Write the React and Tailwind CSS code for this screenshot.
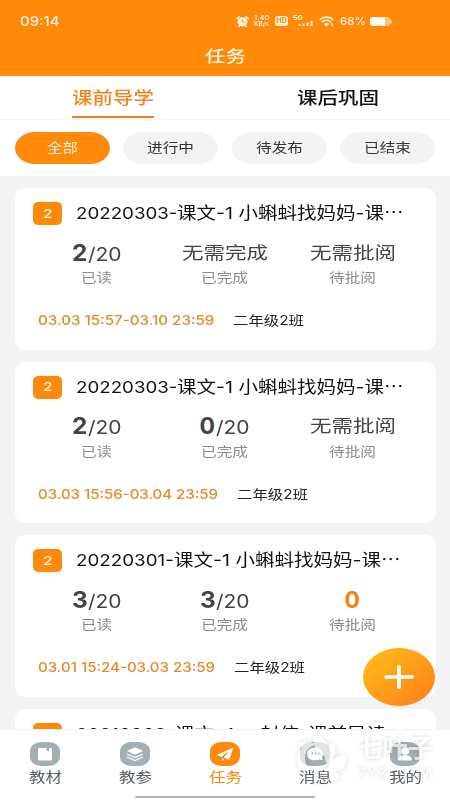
import { useLayoutEffect, useRef, useState } from "react";
import clsx from "clsx";

const FILTERS = [
  { label: "全部", width: 31 },
  { label: "进行中", width: 47 },
  { label: "待发布", width: 47 },
  { label: "已结束", width: 47 }
];

const TASKS = [
  {
    head: "20220303-",
    headWidth: 101,
    tail: "课文-1 小蝌蚪找妈妈-课⋯",
    tailWidth: 227,
    stats: [
      { label: "已读", count: "2", total: "/20" },
      { label: "已完成", text: "无需完成" },
      { label: "待批阅", text: "无需批阅" }
    ],
    period: "03.03 15:57-03.10 23:59",
    periodWidth: 176,
    group: "二年级2班"
  },
  {
    head: "20220303-",
    headWidth: 101,
    tail: "课文-1 小蝌蚪找妈妈-课⋯",
    tailWidth: 227,
    stats: [
      { label: "已读", count: "2", total: "/20" },
      { label: "已完成", count: "0", total: "/20" },
      { label: "待批阅", text: "无需批阅" }
    ],
    period: "03.03 15:56-03.04 23:59",
    periodWidth: 180,
    group: "二年级2班"
  },
  {
    head: "20220301-",
    headWidth: 98,
    tail: "课文-1 小蝌蚪找妈妈-课⋯",
    tailWidth: 227,
    stats: [
      { label: "已读", count: "3", total: "/20" },
      { label: "已完成", count: "3", total: "/20" },
      { label: "待批阅", count: "0", active: true }
    ],
    period: "03.01 15:24-03.03 23:59",
    periodWidth: 177,
    group: "二年级2班"
  },
  {
    head: "20210903-",
    headWidth: 99,
    tail: "课文-4 一封信-课前导读",
    tailWidth: 211,
    stats: [],
    period: "",
    periodWidth: 0,
    group: ""
  }
];

// Stretches a single line of text to the given width
const Fit = ({ width, className, children }) => {
  const ref = useRef(null);
  const [scale, setScale] = useState(1.2);

  useLayoutEffect(() => {
    const measure = () => ref.current && setScale(width / ref.current.offsetWidth);
    measure();
    document.fonts.ready.then(measure);
  }, [width]);

  return (
    <span className={clsx("inline-flex shrink-0 whitespace-pre", className)} style={{ width }}>
      <span ref={ref} className="shrink-0 origin-left" style={{ transform: `scaleX(${scale})` }}>
        {children}
      </span>
    </span>
  );
};

const StatusBar = () => (
  <div className="flex h-[42px] items-center pl-5 text-[#fff3dc]">
    <Fit width={39} className="mt-px text-[13px] font-medium">09:14</Fit>
    <div className="ml-[177px] flex items-center">
      <svg className="h-[11px] w-[13px]" viewBox="0 0 13 11" fill="none">
        <ellipse cx="6.5" cy="5.8" rx="5" ry="4.7" fill="currentColor" />
        <path d="M.8 2.6 3 .7M12.2 2.6 10 .7M2.8 10.6l1-1M10.2 10.6l-1-1" stroke="currentColor" strokeWidth="1.4" strokeLinecap="round" />
        <path d="M6.3 3.5v2.5h2.2" stroke="#ff8a0a" strokeWidth="1" />
      </svg>
      <div className="ml-[5px] flex flex-col text-[6px] leading-[6px] font-semibold">
        <Fit width={15}>1.40</Fit>
        <Fit width={15}>KB/s</Fit>
      </div>
      <div className="ml-[6px] flex h-[10px] w-[13px] items-center justify-center rounded-[3px] bg-[#fff3dc] text-[#ff8a0a]">
        <Fit width={10} className="text-[7px] leading-[8px] font-bold">HD</Fit>
      </div>
      <svg className="ml-[5px] h-[12px] w-[21px]" viewBox="0 0 21 12" fill="currentColor">
        <text x="0" y="5.2" fontSize="6.5" fontWeight="700" textLength="10" lengthAdjust="spacingAndGlyphs">5G</text>
        <path d="M5.5 9h2v2h-2zM9.5 8.5h2V11h-2zM13.5 7.5h2V11h-2zM17.5 6h2v5h-2z" />
      </svg>
      <svg className="ml-[5px] h-[11px] w-[15px]" viewBox="0 0 15 11" fill="none" stroke="currentColor" strokeWidth="1.7">
        <path d="M.6 3.8c3.8-3.6 10-3.6 13.8 0M2.9 6.2c2.7-2.4 6.5-2.4 9.2 0" />
        <path d="M4.8 8c1.6-1.4 3.8-1.4 5.4 0L7.5 10.5z" fill="currentColor" stroke="none" />
        <path d="M13 7v3.6" strokeWidth="1.5" />
      </svg>
      <Fit width={26} className="mt-px ml-[6px] text-[11px] font-medium">68%</Fit>
      <div className="ml-1 flex items-center">
        <div className="flex h-[9px] w-5 overflow-hidden rounded-[3px] bg-[#ffc483]">
          <div className="w-[15px] bg-[#fffaf0]" />
        </div>
        <div className="h-[5px] w-[2px] rounded-r-full bg-[#ffc483]" />
      </div>
    </div>
  </div>
);

const Stat = ({ label, count, total, text, active }) => (
  <div className="flex w-32 flex-col items-center">
    <div className="flex h-7 items-center text-[#444]">
      {text && <Fit width={86} className="text-[17.5px]">{text}</Fit>}
      {count && (
        <div className="flex items-baseline">
          <Fit width={16} className={clsx("text-[23px] leading-7 font-bold", active && "text-[#f5820d]")}>{count}</Fit>
          {total && <Fit width={34} className="text-[18.5px] leading-7">{total}</Fit>}
        </div>
      )}
    </div>
    <Fit width={label.length === 2 ? 31 : 47} className="text-[13px] leading-5 text-[#8c8c8c]">
      {label}
    </Fit>
  </div>
);

const TaskCard = ({ task }) => (
  <div className="h-[161.5px] shrink-0 rounded-[10px] bg-white pt-[14px] pl-[18px]">
    <div className="flex h-[23px] items-center">
      <div className="flex h-[23px] w-[29px] items-center justify-center rounded-[5px] bg-[#ff8a0a] text-[#fff3dc]">
        <Fit width={9} className="text-[12px] font-medium">2</Fit>
      </div>
      <Fit width={task.headWidth} className="ml-[14px] text-[16.5px] text-[#111]">{task.head}</Fit>
      <Fit width={task.tailWidth} className="text-[16.5px] text-[#111]">{task.tail}</Fit>
    </div>
    <div className="mt-[14px] flex h-[51px]">
      {task.stats.map((stat) => (
        <Stat key={stat.label} {...stat} />
      ))}
    </div>
    {task.period && (
      <div className="mt-[21px] ml-[5px] flex h-5 items-center">
        <Fit width={task.periodWidth} className="text-[13px] font-medium text-[#e8892a]">{task.period}</Fit>
        <Fit width={71} className="ml-[19px] text-[13px] text-[#222]">{task.group}</Fit>
      </div>
    )}
  </div>
);

const NAV = [
  {
    label: "教材",
    icon: (
      <>
        <rect x="8" y="6" width="14" height="12.5" rx="1.2" fill="#fff" />
        <path d="M16.6 5.5v4l1.2-.9 1.2.9v-4z" fill="#a3afb4" />
      </>
    )
  },
  {
    label: "教参",
    icon: (
      <>
        <path d="M15 5.3 23 9l-8 3.8L7 9z" fill="#fff" />
        <path d="m7 12 8 3.6 8-3.6M7 15l8 3.6 8-3.6" fill="none" stroke="#fff" strokeWidth="1.2" />
      </>
    )
  },
  {
    label: "任务",
    active: true,
    icon: (
      <>
        <path d="M23.5 5.5 6.5 13l5 1.7 8.5-6.4-6.2 7.2 5.4 2.2z" fill="#fff" />
        <path d="M12 16v3.4l2.2-2.3z" fill="#fff" />
      </>
    )
  },
  {
    label: "消息",
    icon: (
      <>
        <path d="M15 5.5c4.6 0 8 2.6 8 6.2 0 2-.8 3.2-.8 4.2l.5 2.4-3.2-.7c-1.3.5-2.9.7-4.5.7-4.6 0-8-2.8-8-6.4s3.4-6.4 8-6.4z" fill="#fff" />
        <path d="M11.5 11.5H13M15 11.5h1.5M18.5 11.5h1.3" stroke="#a3afb4" strokeWidth="1.5" />
      </>
    )
  },
  {
    label: "我的",
    icon: (
      <>
        <ellipse cx="15" cy="9" rx="4.4" ry="3.9" fill="#fff" />
        <path d="M8 18.5c0-3.6 2.7-5.3 7-5.3s7 1.7 7 5.3z" fill="#fff" />
      </>
    )
  }
];

const Watermark = () => (
  <div className="absolute top-[3px] left-[297px] flex text-white">
    <svg className="mt-[2px] h-[50px] w-[50px] opacity-65 drop-shadow-[0_0_3px_rgba(0,0,0,0.2)]" viewBox="0 0 50 50" fill="currentColor">
      <path d="M18 0c10 2 16 10 12 22C20 19 14 10 18 0z" />
      <path d="M36 8c5 9 2 17-7 20-3-9-1-16 7-20z" />
      <path d="M49 20c1 12-6 19-18 17-1-10 6-17 18-17z" />
      <path d="M43 43c-9 5-17 1-19-8 8-3 16 0 19 8z" />
      <path d="M2 9c6-4 13-3 17 1-7 1-11 6-11 13 0 9 7 15 17 17C10 44 0 37 0 23c0-4 2-7 5-10z" />
      <path d="M7 40c5 8 15 10 23 4-6 1-12-1-16-5z" />
    </svg>
    <div className="ml-[10px] flex flex-col [text-shadow:0_0_4px_rgba(0,0,0,0.28)]">
      <Fit width={76} className="text-[25px] leading-[31px] font-bold opacity-65">七叶子</Fit>
      <Fit width={77} className="text-[13px] leading-[18px] tracking-[1px] opacity-80">7YZ.COM</Fit>
    </div>
  </div>
);

const BottomNav = () => (
  <nav className="relative h-[71px] shrink-0 border-t border-[#edf2f4] bg-white">
    <div className="flex pt-3">
      {NAV.map(({ label, icon, active }) => (
        <div key={label} className={clsx("flex w-[90px] flex-col items-center", active ? "text-[#ff8a0a]" : "text-[#596065]")}>
          <svg className="h-6 w-[30px]" viewBox="0 0 30 24">
            <rect width="30" height="24" rx="11" ry="9" fill={active ? "#ff8a0a" : "#a3afb4"} />
            {icon}
          </svg>
          <Fit width={33} className="relative z-10 mt-[2px] text-[13.5px] leading-[18px]">{label}</Fit>
        </div>
      ))}
    </div>
    <div className="mx-auto mt-[10px] h-[2px] w-[180px] rounded-full bg-[#b3b3b3]" />
    <Watermark />
  </nav>
);

const App = () => (
  <div className="relative flex h-[800px] w-[450px] flex-col overflow-hidden bg-[#f3f3f3] font-['Inter','Noto_Sans_CJK_SC',sans-serif]">
    <header className="h-[76px] shrink-0 bg-[#ff8a0a]">
      <StatusBar />
      <div className="flex h-7 items-center justify-center text-[#fff3dc]">
        <Fit width={41} className="text-[16px] font-medium">任务</Fit>
      </div>
    </header>

    <div className="h-[100px] shrink-0 bg-white">
      <div className="flex h-[44px] border-b border-[#f6f6f6]">
        <div className="flex w-[225px] flex-col items-center pt-[10px] text-[#f0861c]">
          <Fit width={82} className="text-[16.5px] leading-6 font-medium">课前导学</Fit>
          <div className="mt-[6px] h-[2px] w-[82px] bg-[#f57c14]" />
        </div>
        <div className="flex w-[225px] flex-col items-center pt-[10px] text-[#111]">
          <Fit width={82} className="text-[16.5px] leading-6 font-medium">课后巩固</Fit>
        </div>
      </div>
      <div className="flex justify-between px-[14.5px] pt-3">
        {FILTERS.map(({ label, width }, i) => (
          <div
            key={label}
            className={clsx(
              "flex h-8 w-[95px] items-center justify-center rounded-[20px/16px]",
              i === 0 ? "bg-[#ff8a0a] text-[#fff3dc]" : "bg-[#f3f3f3] text-[#333]"
            )}
          >
            <Fit width={width} className="text-[13px]">{label}</Fit>
          </div>
        ))}
      </div>
    </div>

    <main className="flex min-h-0 flex-1 flex-col gap-3 overflow-hidden px-[14.5px] pt-3">
      {TASKS.map((task, i) => (
        <TaskCard key={i} task={task} />
      ))}
    </main>

    <BottomNav />

    <button className="absolute top-[648px] left-[363px] flex h-[58px] w-[72px] items-center justify-center rounded-[50%] bg-linear-to-br from-[#fdc016] to-[#fd7a1c]">
      <svg className="h-6 w-[30px]" viewBox="0 0 30 24" stroke="#fffdf5" strokeLinecap="round">
        <path d="M2 12h26" strokeWidth="3.4" />
        <path d="M15 2v20" strokeWidth="4" />
      </svg>
    </button>
  </div>
);

export default App;
